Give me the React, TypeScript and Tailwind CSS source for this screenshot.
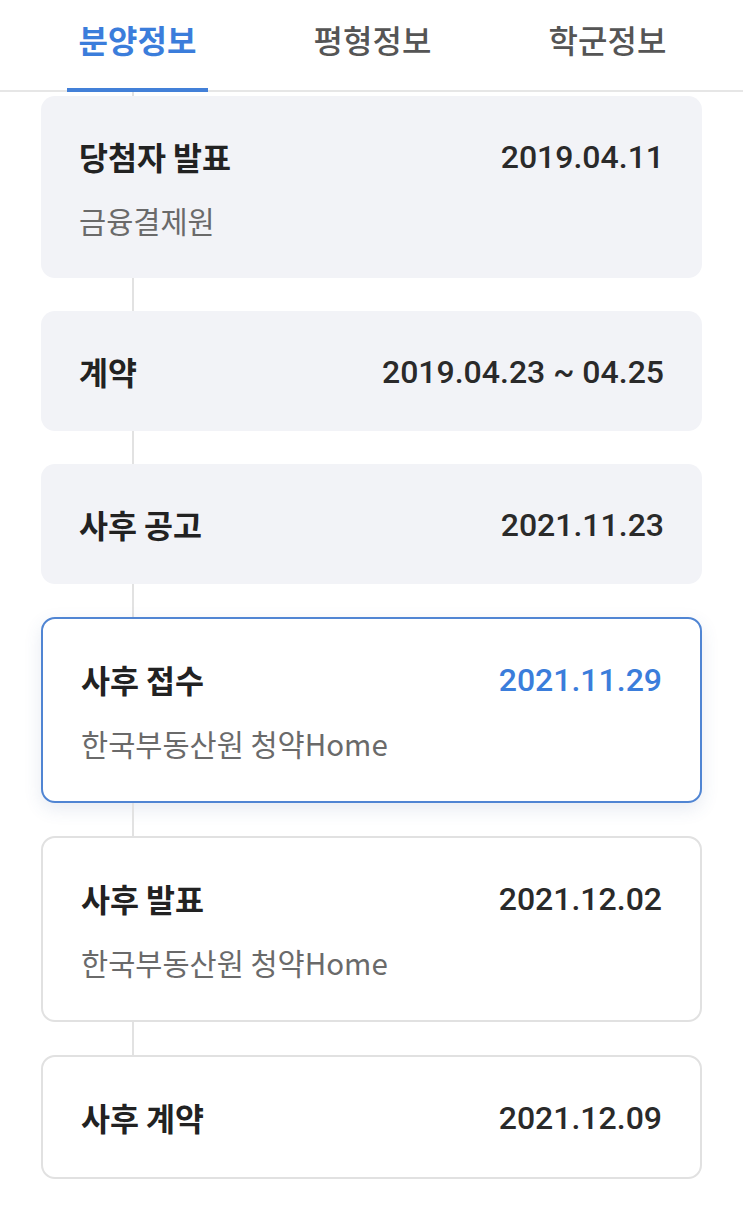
import React from "react";

interface Step {
  title: string;
  date: string;
  sub?: string;
  variant: "filled" | "active" | "outline";
}

const steps: Step[] = [
  { title: "당첨자 발표", date: "2019.04.11", sub: "금융결제원", variant: "filled" },
  { title: "계약", date: "2019.04.23 ~ 04.25", variant: "filled" },
  { title: "사후 공고", date: "2021.11.23", variant: "filled" },
  { title: "사후 접수", date: "2021.11.29", sub: "한국부동산원 청약Home", variant: "active" },
  { title: "사후 발표", date: "2021.12.02", sub: "한국부동산원 청약Home", variant: "outline" },
  { title: "사후 계약", date: "2021.12.09", variant: "outline" },
];

const tabs = ["분양정보", "평형정보", "학군정보"];

const kr = "font-['Noto_Sans_CJK_KR','Noto_Sans',sans-serif]";
const num = "font-['Roboto','Noto_Sans_CJK_KR',sans-serif]";

const Connector = ({ h }: { h: string }) => (
  <div className={`${h} pl-[91px]`}>
    <div className="w-[2px] h-full bg-[#e2e2e2]" />
  </div>
);

const StepCard = ({ step }: { step: Step }) => {
  const box =
    step.variant === "filled"
      ? "bg-[#f2f3f7]"
      : step.variant === "active"
      ? "bg-white border-2 border-[#5085d3] shadow-[0_6px_18px_rgba(60,90,150,0.12)]"
      : "bg-white border-2 border-[#e1e1e1]";
  return (
    <div className={`rounded-[14px] px-[38px] pt-10 pb-[38px] ${box}`}>
      <div className="flex items-center justify-between h-[42px]">
        <span className={`${kr} text-[31.5px] font-bold text-[#222]`}>{step.title}</span>
        <span
          className={`${num} text-[32px] font-medium ${
            step.variant === "active" ? "text-[#3b7ddb]" : "text-[#2a2a2a]"
          }`}
        >
          {step.date}
        </span>
      </div>
      {step.sub && (
        <div className={`${kr} mt-[22px] h-10 flex items-center text-[29.5px] text-[#6a6a6a]`}>
          {step.sub}
        </div>
      )}
    </div>
  );
};

export default function App() {
  return (
    <div className="w-[743px] h-[1205px] bg-white overflow-hidden">
      {/* Tabs */}
      <div className="h-[92px] border-b-2 border-[#e6e6e6] flex pl-5">
        {tabs.map((t, i) => (
          <div key={t} className="w-[235px] flex flex-col items-center">
            <div
              className={`${kr} flex-1 flex items-center pb-[10px] text-[32px] ${
                i === 0 ? "text-[#3b7ddb] font-bold" : "text-[#555] font-medium"
              }`}
            >
              {t}
            </div>
            <div className={`w-[141px] h-1 -mb-[2px] ${i === 0 ? "bg-[#4380d8]" : ""}`} />
          </div>
        ))}
      </div>

      {/* Timeline */}
      <div className="px-[41px]">
        <Connector h="h-[4px]" />
        {steps.map((s, i) => (
          <React.Fragment key={s.title}>
            {i > 0 && <Connector h="h-[33px]" />}
            <StepCard step={s} />
          </React.Fragment>
        ))}
      </div>
    </div>
  );
}
